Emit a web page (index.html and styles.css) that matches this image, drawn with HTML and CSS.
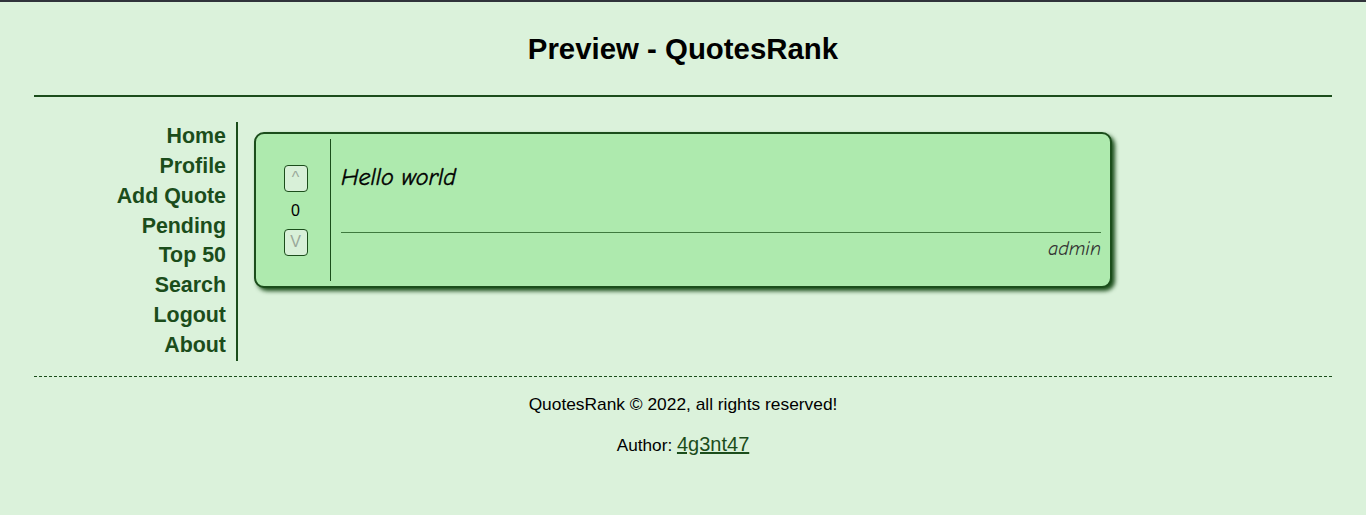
FILE: index.html
```html
<!DOCTYPE html>
<html lang="en">
<head>
<meta charset="utf-8">
<title>Preview - QuotesRank</title>
<link rel="stylesheet" href="styles.css">
</head>
<body>
<div class="page">
  <header class="header">
    <h1 class="title">Preview - QuotesRank</h1>
  </header>
  <div class="main">
    <nav class="nav">
      <a href="#">Home</a>
      <a href="#">Profile</a>
      <a href="#">Add Quote</a>
      <a href="#">Pending</a>
      <a href="#">Top 50</a>
      <a href="#">Search</a>
      <a href="#">Logout</a>
      <a href="#">About</a>
    </nav>
    <section class="content">
      <div class="quote-card">
        <div class="vote">
          <button class="vote-btn" disabled>^</button>
          <span class="vote-count">0</span>
          <button class="vote-btn" disabled>V</button>
        </div>
        <div class="quote-body">
          <p class="quote-text">Hello world</p>
          <div class="quote-rule"></div>
          <p class="quote-author">admin</p>
        </div>
      </div>
    </section>
  </div>
  <footer class="footer">
    <p class="copy">QuotesRank © 2022, all rights reserved!</p>
    <p class="author">Author: <a href="#">4g3nt47</a></p>
  </footer>
</div>
</body>
</html>
```
FILE: styles.css
```css
html, body {
  margin: 0;
  padding: 0;
}
body {
  background: #dbf2db;
  border-top: 2px solid #30343b;
  font-family: "Liberation Sans", Arial, sans-serif;
  color: #000;
  min-height: 513px;
}
.page {
  width: 1298px;
  margin: 0 auto;
}
.header {
  border-bottom: 2px solid #1b4d1b;
  height: 93px;
  display: flex;
  align-items: flex-start;
  justify-content: center;
}
.title {
  margin: 30px 0 0 0;
  font-size: 29.4px;
  line-height: 34px;
  font-weight: bold;
}
.main {
  display: flex;
  align-items: flex-start;
  padding-top: 25px;
}
.nav {
  width: 192px;
  padding: 0 10px 0 0;
  border-right: 2px solid #1b4d1b;
  display: flex;
  flex-direction: column;
  align-items: flex-end;
}
.nav a {
  font-size: 21.4px;
  line-height: 29.85px;
  font-weight: bold;
  color: #1b4d1b;
  text-decoration: none;
}
.content {
  padding: 10px 0 0 16px;
}
.quote-card {
  width: 844px;
  display: flex;
  background: #aeeaae;
  border: 2px solid #1b4d1b;
  border-radius: 10px;
  box-shadow: 3px 3px 4px #1b4d1b;
  padding: 5px;
  min-height: 142px;
}
.vote {
  width: 69px;
  border-right: 1px solid #1b4d1b;
  display: flex;
  flex-direction: column;
  align-items: center;
  justify-content: center;
}
.vote-btn {
  width: 24px;
  height: 27px;
  padding: 0;
  background: #d8f0d8;
  border: 1px solid #1b4d1b;
  border-radius: 4px;
  color: #9aa89a;
  font-family: "Liberation Sans", Arial, sans-serif;
  font-size: 16px;
}
.vote-count {
  font-size: 16px;
  line-height: 37px;
}
.quote-body {
  flex: 1;
  padding: 0 4px 0 10px;
}
.quote-text {
  margin: 23px 0 0 0;
  font-family: "Comic Sans MS", "Comic Neue", cursive;
  font-style: italic;
  font-weight: normal;
  font-size: 24px;
  line-height: 30px;
  -webkit-text-stroke: 0.4px #000;
}
.quote-rule {
  margin-top: 40px;
  border-top: 1px solid #3f7a3f;
}
.quote-author {
  margin: 2px 0 0 0;
  text-align: right;
  font-family: "Comic Sans MS", "Comic Neue", cursive;
  font-style: italic;
  font-size: 20px;
  line-height: 28px;
  color: #333;
}
.footer {
  margin-top: 15px;
  border-top: 1px dashed #1b4d1b;
  text-align: center;
  padding-top: 17px;
}
.copy {
  margin: 0;
  font-size: 17.35px;
  line-height: 20px;
}
.author {
  margin: 18px 0 0 0;
  font-size: 17.2px;
  line-height: 24px;
}
.author a {
  font-size: 20px;
  color: #1b4d1b;
}
```
